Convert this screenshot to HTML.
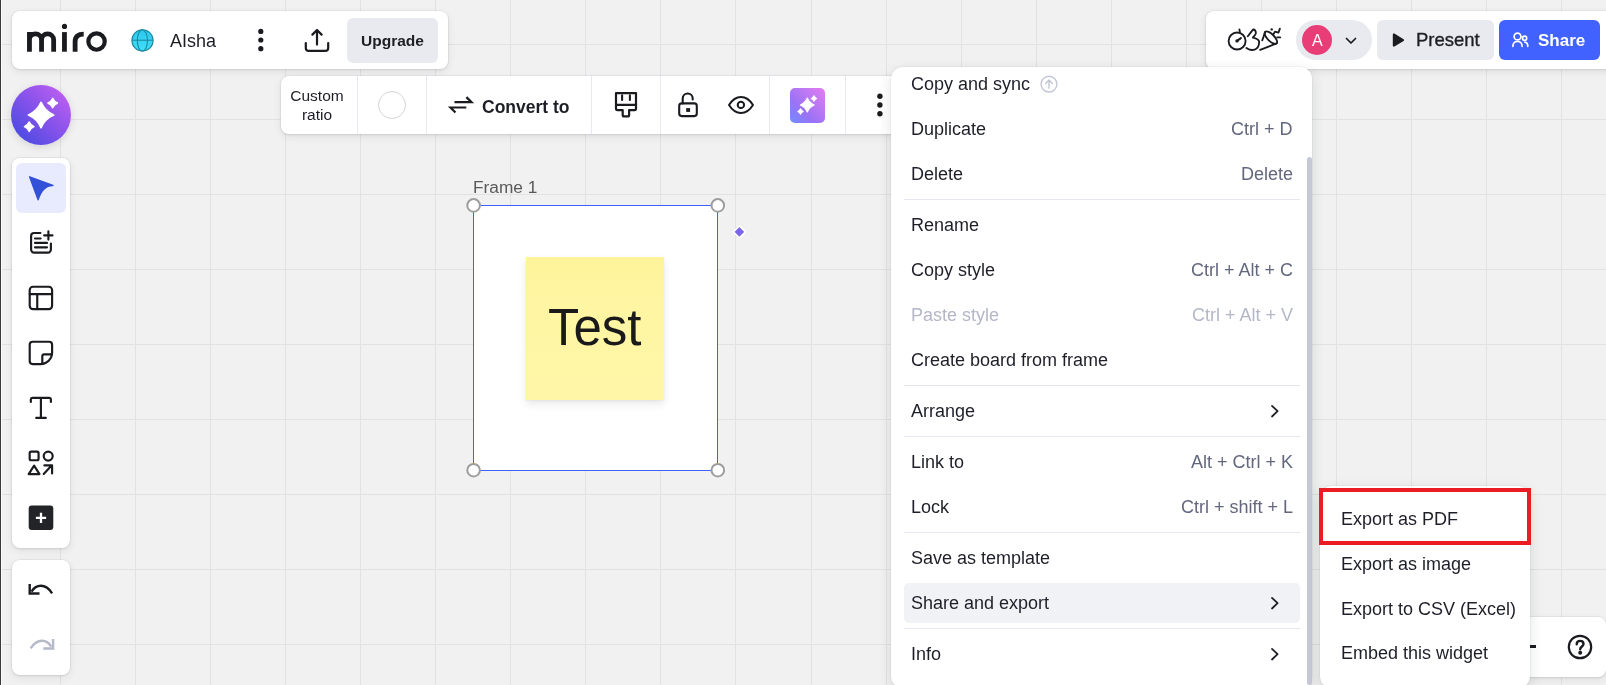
<!DOCTYPE html>
<html><head><meta charset="utf-8">
<style>
*{margin:0;padding:0;box-sizing:border-box}
html,body{width:1606px;height:685px;overflow:hidden}
body{position:relative;background:#f1f1f1;font-family:"Liberation Sans",sans-serif;color:#1d1d26}
.abs{position:absolute}
#grid{position:absolute;left:0;top:0;width:1606px;height:685px}
.panel{position:absolute;background:#fff;border-radius:8px;box-shadow:0 0 0 1px rgba(34,36,70,0.045),0 1px 3px rgba(34,36,40,0.08),0 3px 9px rgba(34,36,40,0.08)}
.t{position:absolute;white-space:pre;line-height:1;will-change:transform}
.sep{position:absolute;width:1px;background:#e8e9f0}
.mi{position:absolute;will-change:transform;left:911px;font-size:18px;white-space:pre;line-height:1;color:#1e1f29}
.sc{position:absolute;will-change:transform;right:313px;font-size:18px;white-space:pre;line-height:1;color:#62677e}
.hr{position:absolute;left:904px;width:396px;height:1px;background:#e6e7ee}
</style></head>
<body>
<svg width="0" height="0" style="position:absolute"><defs><path id="spk" d="M0 -1C0.2 -0.53 0.53 -0.2 1 0C0.53 0.2 0.2 0.53 0 1C-0.2 0.53 -0.53 0.2 -1 0C-0.53 -0.2 -0.2 -0.53 0 -1Z" stroke-linejoin="round"/></defs></svg>
<svg id="grid" width="1606" height="685" fill="#e2e2e2" shape-rendering="crispEdges"><rect x="60" y="0" width="1" height="685"/><rect x="135" y="0" width="1" height="685"/><rect x="210" y="0" width="1" height="685"/><rect x="285" y="0" width="1" height="685"/><rect x="360" y="0" width="1" height="685"/><rect x="435" y="0" width="1" height="685"/><rect x="510" y="0" width="1" height="685"/><rect x="585" y="0" width="1" height="685"/><rect x="660" y="0" width="1" height="685"/><rect x="735" y="0" width="1" height="685"/><rect x="811" y="0" width="1" height="685"/><rect x="886" y="0" width="1" height="685"/><rect x="961" y="0" width="1" height="685"/><rect x="1036" y="0" width="1" height="685"/><rect x="1111" y="0" width="1" height="685"/><rect x="1186" y="0" width="1" height="685"/><rect x="1261" y="0" width="1" height="685"/><rect x="1336" y="0" width="1" height="685"/><rect x="1411" y="0" width="1" height="685"/><rect x="1486" y="0" width="1" height="685"/><rect x="1561" y="0" width="1" height="685"/><rect x="0" y="44" width="1606" height="1"/><rect x="0" y="119" width="1606" height="1"/><rect x="0" y="194" width="1606" height="1"/><rect x="0" y="269" width="1606" height="1"/><rect x="0" y="344" width="1606" height="1"/><rect x="0" y="419" width="1606" height="1"/><rect x="0" y="494" width="1606" height="1"/><rect x="0" y="569" width="1606" height="1"/><rect x="0" y="644" width="1606" height="1"/></svg>
<div class="abs" style="left:0;top:0;width:1px;height:685px;background:#3a3a3a"></div>
<div class="abs" style="left:1px;top:0;width:1px;height:685px;background:#fbfbfb"></div>

<!-- top-left toolbar -->
<div class="panel" style="left:12px;top:11px;width:436px;height:58px"></div>
<svg class="abs" style="left:0;top:0" width="460" height="80" fill="none" stroke="#1a1b1f">
 <g stroke-width="4.8" stroke-linecap="butt">
  <path d="M29.45 51.7V31.9M29.45 40A6.05 6.05 0 0 1 41.55 40V51.7M41.55 40A6.05 6.05 0 0 1 53.65 40V51.7"/>
  <path d="M64.45 51.7V32.1"/>
  <path d="M75.1 51.7V41.5C75.1 36.6 78.4 34.05 83.7 34.05"/>
 </g>
 <circle cx="96.55" cy="41.55" r="8.2" stroke-width="4.2"/>
 <circle cx="64.5" cy="26.4" r="2.6" fill="#1a1b1f" stroke="none"/>
 <defs><linearGradient id="gl" x1="0" y1="0" x2="0" y2="1"><stop offset="0" stop-color="#2cc6ec"/><stop offset="1" stop-color="#42e0fa"/></linearGradient></defs>
 <g stroke="#1b8aa3" stroke-width="1.1">
  <circle cx="142.5" cy="40.4" r="10.6" fill="url(#gl)"/>
  <ellipse cx="142.4" cy="40.4" rx="5.1" ry="10.6"/>
  <path d="M132 40.2H153"/>
 </g>
 <g fill="#1a1b1f" stroke="none">
  <circle cx="260.8" cy="31.4" r="2.6"/><circle cx="260.8" cy="40" r="2.6"/><circle cx="260.8" cy="48.7" r="2.6"/>
 </g>
 <g stroke-width="2.2" stroke-linecap="round" stroke-linejoin="round">
  <path d="M305.8 43V47.9A3 3 0 0 0 308.8 50.9H325.2A3 3 0 0 0 328.2 47.9V43"/>
  <path d="M317 44.6V30.5M312.4 34.6L317 30L321.6 34.6"/>
 </g>
</svg>
<div class="t" style="left:170px;top:32px;font-size:18px;color:#1e1f26">AIsha</div>
<div class="abs" style="left:347px;top:18px;width:91px;height:45px;border-radius:6px;background:#e9eaef"></div>
<div class="t" style="left:361px;top:33px;font-size:15.5px;font-weight:700;color:#1e1f26">Upgrade</div>

<!-- top-right toolbar -->
<div class="panel" style="left:1206px;top:11px;width:420px;height:58px"></div>
<svg class="abs" style="left:1200px;top:0" width="406" height="80" fill="none" stroke="#1a1b1f" stroke-width="1.85" stroke-linecap="round" stroke-linejoin="round">
 <circle cx="37.1" cy="41" r="8.5"/>
 <path d="M39.4 29.4L39.9 32.2"/>
 <path d="M37 40.9L40.9 38.1" stroke-width="2"/><circle cx="37" cy="40.9" r="1.7" fill="#1a1b1f" stroke="none"/>
 <path d="M47.8 36.2L53 29.6C54.8 29.2 56.2 31.4 55.8 33.4C55.3 35.3 53.4 36.6 52.9 37.6C55.5 38.2 59.3 39 59.2 42.2C59 45.4 57.3 48.6 54.6 49.6C51.8 50.6 48.8 49.5 46.4 47.9"/>
 <path d="M60.2 49.8L76.6 43.4M62.3 40.3L65.2 31.9"/>
 <ellipse cx="70.9" cy="37.65" rx="8.1" ry="3.4" transform="rotate(45 70.9 37.65)"/>
 <circle cx="71.7" cy="29.4" r="1.2" fill="#1a1b1f" stroke="none"/>
 <path d="M73.6 33.9L75.1 31.6L78.4 32.6L79.9 28.6"/>
 <path d="M77.2 37.4H80.2"/>
</svg>
<div class="abs" style="left:1296px;top:20px;width:76px;height:40px;border-radius:20px;background:#e9eaef"></div>
<div class="abs" style="left:1302px;top:25px;width:30px;height:30px;border-radius:50%;background:#e93d77"></div>
<div class="t" style="left:1311.5px;top:32.5px;font-size:16px;color:#fff">A</div>
<svg class="abs" style="left:1340px;top:30px" width="22" height="20" fill="none" stroke="#1a1b1f" stroke-width="1.7" stroke-linecap="round" stroke-linejoin="round"><path d="M6.5 8.5L11 13L15.5 8.5"/></svg>
<div class="abs" style="left:1377px;top:20px;width:117px;height:40px;border-radius:6px;background:#e9eaef"></div>
<svg class="abs" style="left:1388px;top:30px" width="20" height="20"><path d="M4.8 4.5C4.8 3.6 5.7 3.1 6.4 3.6L15.6 9.2C16.3 9.6 16.3 10.5 15.6 10.9L6.4 16.5C5.7 16.9 4.8 16.5 4.8 15.6Z" fill="#1a1b1f"/></svg>
<div class="t" style="left:1416px;top:31px;font-size:18.5px;color:#1e1f26;-webkit-text-stroke:0.35px #1e1f26">Present</div>
<div class="abs" style="left:1499px;top:20px;width:101px;height:40px;border-radius:6px;background:#4262ff"></div>
<svg class="abs" style="left:1508px;top:30px" width="24" height="20" fill="none" stroke="#fff" stroke-width="1.7" stroke-linecap="round">
 <circle cx="9.5" cy="6.5" r="3.4"/><path d="M4.9 16.3C4.9 13.2 6.9 11.5 9.5 11.5C12.1 11.5 14.1 13.2 14.1 16.3"/>
 <circle cx="16.6" cy="8.3" r="2.1"/><path d="M16.9 12.2C18.8 12.4 19.8 14 19.8 16.3"/>
</svg>
<div class="t" style="left:1538px;top:32px;font-size:17px;font-weight:700;color:#fff">Share</div>

<!-- context toolbar -->
<div class="panel" style="left:281px;top:76px;width:640px;height:58px"></div>
<div class="t" style="left:289px;top:86px;font-size:15.5px;color:#1e1f26;line-height:19px;text-align:center;width:56px">Custom<br>ratio</div>
<div class="sep" style="left:357px;top:76px;height:58px"></div>
<div class="abs" style="left:378px;top:91px;width:28px;height:28px;border-radius:50%;border:1px solid #d5d5d5;background:#fff"></div>
<div class="sep" style="left:426px;top:76px;height:58px"></div>
<svg class="abs" style="left:440px;top:85px" width="40" height="40" fill="none" stroke="#1a1b1f" stroke-width="2.2" stroke-linecap="square" stroke-linejoin="miter">
 <path d="M15.6 17.2H31.5L27.2 12.9"/><path d="M25.2 22.5H10.5L14.7 26.7"/>
</svg>
<div class="t" style="left:482px;top:99px;font-size:17.5px;font-weight:700;color:#1e1f26">Convert to</div>
<div class="sep" style="left:591px;top:76px;height:58px"></div>
<svg class="abs" style="left:600px;top:80px" width="250" height="50" fill="none" stroke="#1a1b1f" stroke-width="2" stroke-linecap="round" stroke-linejoin="round">
 <path d="M16 13.2H36V28.6C36 29.4 35.4 30.1 34.5 30.1H29.1V34.9C29.1 35.7 28.4 36.4 27.6 36.4H24.2C23.4 36.4 22.7 35.7 22.7 34.9V30.1H17.5C16.7 30.1 16 29.4 16 28.6Z" stroke-width="2.2"/>
 <path d="M16 24.9H36M22.1 15.3V20M29.9 15.3V20" stroke-width="2.1"/>
 <path d="M82.7 23.4V18.5A5 5 0 0 1 92.7 18.5V19.4" stroke-width="2.1"/>
 <rect x="79.2" y="23.4" width="17.6" height="12.7" rx="2.5" stroke-width="2.1"/>
 <rect x="86.2" y="28.1" width="3.9" height="3.8" fill="#1a1b1f" stroke="none"/>
 <path d="M129 25C132 20.2 136.1 17 141 17C145.9 17 150 20.2 153 25C150 29.8 145.9 33 141 33C136.1 33 132 29.8 129 25Z"/>
 <circle cx="140.9" cy="24.9" r="3.2"/>
</svg>
<div class="sep" style="left:660px;top:76px;height:58px"></div>
<div class="sep" style="left:769px;top:76px;height:58px"></div>
<div class="abs" style="left:790px;top:88px;width:35px;height:35px;border-radius:5px;background:linear-gradient(45deg,#6f8dff 0%,#9a72f6 35%,#c179f3 70%,#e47cf0 100%)"></div>
<svg class="abs" style="left:790px;top:88px" width="35" height="35" fill="#fff" stroke="#fff">
 <use href="#spk" transform="translate(17.3 17) scale(6.9)" stroke-width="0.18"/>
 <use href="#spk" transform="translate(24 10.5) scale(2.7)" stroke-width="0.4"/>
 <use href="#spk" transform="translate(10.5 23.5) scale(2.7)" stroke-width="0.4"/>
</svg>
<div class="sep" style="left:845px;top:76px;height:58px"></div>
<svg class="abs" style="left:870px;top:90px" width="20" height="30" fill="#1a1b1f"><circle cx="9.9" cy="6.3" r="2.7"/><circle cx="9.9" cy="15" r="2.7"/><circle cx="9.9" cy="23.8" r="2.7"/></svg>

<!-- AI circle -->
<div class="abs" style="left:11px;top:85px;width:60px;height:60px;border-radius:50%;background:linear-gradient(45deg,#3a4ae0 0%,#8452ea 50%,#cb62f2 100%);box-shadow:0 2px 8px rgba(0,0,0,0.12)"></div>
<svg class="abs" style="left:11px;top:85px" width="60" height="60" fill="#fff" stroke="#fff">
 <use href="#spk" transform="translate(30.05 30.05) scale(12.6)" stroke-width="0.14"/>
 <use href="#spk" transform="translate(41.7 18) scale(4.8)" stroke-width="0.3"/>
 <use href="#spk" transform="translate(18.2 41.7) scale(4.8)" stroke-width="0.3"/>
</svg>

<!-- left toolbars -->
<div class="panel" style="left:12px;top:158px;width:58px;height:390px"></div>
<div class="abs" style="left:16px;top:163px;width:50px;height:50px;border-radius:6px;background:#e7ebfd"></div>
<svg class="abs" style="left:0;top:150px" width="80" height="530" fill="none" stroke="#1a1b1f" stroke-width="2.15" stroke-linecap="round" stroke-linejoin="round">
 <path d="M29.6 26.8L52.9 35.5Q42.7 35.3 38.1 49.7Z" fill="#3350d8" stroke="#3350d8" stroke-width="1.4"/>
 <path d="M40.4 83H34.1A3 3 0 0 0 31.1 86V99.6A3 3 0 0 0 34.1 102.6H47.9A3 3 0 0 0 50.9 99.6V93.5"/>
 <path d="M35 88.5H40.6M35 92.9H47M35 97.3H47M48.4 81.3V89.6M44.2 85.4H52.5"/>
 <rect x="29.7" y="136.7" width="22.4" height="22.4" rx="3.3"/>
 <path d="M29.7 144.05H52.1M37.24 144.05V159.1"/>
 <path d="M52.1 200.7V194.7A3 3 0 0 0 49.1 191.7H32.7A3 3 0 0 0 29.7 194.7V211.1A3 3 0 0 0 32.7 214.1H40.6A11.5 11.5 0 0 0 52.1 202.6Z"/>
 <path d="M42.3 213.6V206.3A2 2 0 0 1 44.3 204.3H51.3"/>
 <path d="M30.84 252V249.3A1.5 1.5 0 0 1 32.3 247.84H49.4A1.5 1.5 0 0 1 50.9 249.3V252M40.9 247.84V267.9M36.2 267.9H45.8"/>
 <rect x="29.67" y="301.67" width="8.9" height="8.6" rx="1.5"/>
 <circle cx="48.2" cy="306.1" r="4.5"/>
 <path d="M34.1 315.7L28.7 324.1H39.5Z"/>
 <path d="M43.7 323.9L51.6 315.5M44.4 315.4H52.1V323.4"/>
 <rect x="28.7" y="355.5" width="24.6" height="24.5" rx="3" fill="#222428" stroke="none"/>
 <path d="M41 362.7V373M35.9 367.8H46.1" stroke="#fff" stroke-width="2.3" stroke-linecap="butt"/>
</svg>
<div class="panel" style="left:12px;top:560px;width:58px;height:115px"></div>
<svg class="abs" style="left:0;top:570px" width="80" height="100" fill="none" stroke-width="2.4" stroke-linecap="butt" stroke-linejoin="miter">
 <g stroke="#1a1b1f"><path d="M29.7 13.9V23.5H39.5"/><path d="M31.5 21.6C34 17.7 37.3 15.8 40.9 15.8C45.3 15.8 49 18.5 52.1 23.3"/></g>
 <g stroke="#b5b9c8"><path d="M53.1 68.9V78.5H43.3"/><path d="M51.3 76.6C48.8 72.7 45.5 70.8 41.9 70.8C37.5 70.8 33.8 73.5 30.7 78.3"/></g>
</svg>

<!-- frame -->
<div class="t" style="left:473px;top:178.5px;font-size:17.3px;color:#5a5a5a">Frame 1</div>
<div class="abs" style="left:473px;top:205px;width:245px;height:266px;background:#fff;border:1px solid #3f60ff"></div>
<div class="abs" style="left:526px;top:257px;width:138px;height:143px;background:linear-gradient(180deg,#fdf39a 0%,#fff5a2 30%,#fff7a8 100%);box-shadow:0 4px 9px rgba(0,0,0,0.09),0 1px 2px rgba(0,0,0,0.05)"></div>
<div class="t" style="left:548px;top:301.5px;font-size:51px;color:#1a1a1a">Test</div>
<svg class="abs" style="left:460px;top:195px" width="300" height="290" fill="#fff" stroke="#9d9d9d" stroke-width="2">
 <circle cx="13.6" cy="10.4" r="6.3"/><circle cx="257.8" cy="10.4" r="6.3"/>
 <circle cx="13.6" cy="275.2" r="6.3"/><circle cx="257.8" cy="275.2" r="6.3"/>
 <path d="M279.4 30.9L285.4 36.9L279.4 42.9L273.4 36.9Z" fill="#7a66e8" stroke="#fff" stroke-width="1.6" stroke-linejoin="round"/>
</svg>

<!-- bottom-right widget -->
<div class="panel" style="left:1470px;top:617px;width:136px;height:60px"></div>
<div class="abs" style="left:1520px;top:645px;width:16px;height:2.5px;background:#1a1b1f"></div>
<svg class="abs" style="left:1565px;top:632px" width="30" height="30" fill="none" stroke="#1a1b1f" stroke-width="2.2" stroke-linecap="round"><circle cx="15" cy="15" r="11.2"/><path d="M11.7 12.3C11.7 10.3 13.2 8.9 15.1 8.9C17 8.9 18.5 10.2 18.5 12.1C18.5 14.4 15.2 14.7 15.2 17.2" stroke-width="2.4"/><circle cx="15.2" cy="20.7" r="0.9" fill="#1a1b1f"/></svg>

<!-- context menu -->
<div class="panel" style="left:891px;top:67px;width:421px;height:621px;border-radius:12px;box-shadow:0 0 0 1px rgba(0,0,0,0.03),0 4px 14px rgba(34,36,40,0.13)"></div>
<div class="abs" style="left:904px;top:583px;width:396px;height:40px;border-radius:5px;background:#f1f2f6"></div>
<div class="hr" style="top:199px"></div>
<div class="hr" style="top:385px"></div>
<div class="hr" style="top:436px"></div>
<div class="hr" style="top:532px"></div>
<div class="hr" style="top:628px"></div>
<div class="mi" style="top:75px">Copy and sync</div>
<div class="mi" style="top:120px">Duplicate</div>
<div class="sc" style="top:120px">Ctrl + D</div>
<div class="mi" style="top:165px">Delete</div>
<div class="sc" style="top:165px">Delete</div>
<div class="mi" style="top:216px">Rename</div>
<div class="mi" style="top:261px">Copy style</div>
<div class="sc" style="top:261px">Ctrl + Alt + C</div>
<div class="mi" style="top:306px;color:#b3b7c8">Paste style</div>
<div class="sc" style="top:306px;color:#b3b7c8">Ctrl + Alt + V</div>
<div class="mi" style="top:351px">Create board from frame</div>
<div class="mi" style="top:402px">Arrange</div>
<div class="mi" style="top:453px">Link to</div>
<div class="sc" style="top:453px">Alt + Ctrl + K</div>
<div class="mi" style="top:498px">Lock</div>
<div class="sc" style="top:498px">Ctrl + shift + L</div>
<div class="mi" style="top:549px">Save as template</div>
<div class="mi" style="top:594px">Share and export</div>
<div class="mi" style="top:645px">Info</div>
<svg class="abs" style="left:1260px;top:0" width="30" height="685" fill="none" stroke="#1e1f26" stroke-width="1.8" stroke-linecap="round" stroke-linejoin="round"><path d="M12 405.9L17.6 411.2L12 416.5"/><path d="M12 597.9L17.6 603.2L12 608.5"/><path d="M12 648.9L17.6 654.2L12 659.5"/></svg>
<svg class="abs" style="left:1038px;top:73px" width="22" height="22" fill="none" stroke="#c3c7d5" stroke-width="1.4" stroke-linecap="round" stroke-linejoin="round"><circle cx="11" cy="11.1" r="7.9"/><path d="M11 15.3V7.2M7.7 10.4L11 7.1L14.3 10.4"/></svg>
<div class="abs" style="left:1307px;top:157px;width:5px;height:528px;border-radius:3px;background:#c6c8d5"></div>

<!-- submenu -->
<div class="panel" style="left:1320px;top:486px;width:209.5px;height:202px;border-radius:12px;box-shadow:0 0 0 1px rgba(0,0,0,0.03),0 4px 14px rgba(34,36,40,0.13)"></div>
<div class="mi" style="left:1341px;top:510px">Export as PDF</div>
<div class="mi" style="left:1341px;top:555px">Export as image</div>
<div class="mi" style="left:1341px;top:600px">Export to CSV (Excel)</div>
<div class="mi" style="left:1341px;top:644px">Embed this widget</div>
<div class="abs" style="left:1319px;top:488px;width:212px;height:57px;border:4.6px solid #ec1c24"></div>
</body></html>
